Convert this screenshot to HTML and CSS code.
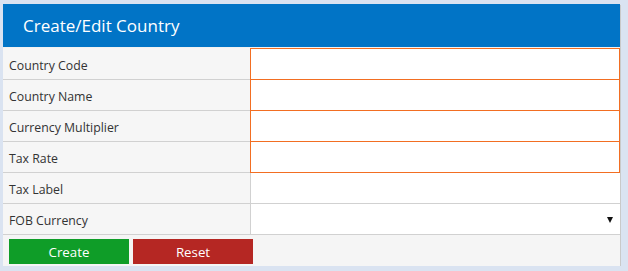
FILE: index.html
```html
<!DOCTYPE html>
<html lang="en">
<head>
  <meta charset="UTF-8">
  <title>Create/Edit Country</title>
  <link rel="stylesheet" href="styles.css">
</head>
<body>
  <div class="panel">
    <header class="panel-head">Create/Edit Country</header>
    <form class="country-form">
      <div class="row">
        <label class="label" for="code">Country Code</label>
        <div class="field"><input type="text" id="code" class="required"></div>
      </div>
      <div class="row">
        <label class="label" for="name">Country Name</label>
        <div class="field"><input type="text" id="name" class="required"></div>
      </div>
      <div class="row">
        <label class="label" for="multiplier">Currency Multiplier</label>
        <div class="field"><input type="text" id="multiplier" class="required"></div>
      </div>
      <div class="row">
        <label class="label" for="taxRate">Tax Rate</label>
        <div class="field"><input type="text" id="taxRate" class="required"></div>
      </div>
      <div class="row">
        <label class="label" for="taxLabel">Tax Label</label>
        <div class="field"><input type="text" id="taxLabel"></div>
      </div>
      <div class="row">
        <label class="label" for="fob">FOB Currency</label>
        <div class="field select-wrap">
          <select id="fob">
            <option></option>
          </select>
        </div>
      </div>
      <div class="actions">
        <button type="submit" class="btn btn-create">Create</button>
        <button type="reset" class="btn btn-reset">Reset</button>
      </div>
    </form>
  </div>
</body>
</html>
```

FILE: styles.css
```css
/* reset */
* { margin: 0; padding: 0; box-sizing: border-box; }
body {
  font-family: 'Open Sans', 'Noto Sans', sans-serif;
  background-color: #dae3f1;
  color: #333;
  padding: 4px 0 0 3px;
}
/* panel */
.panel {
  width: 617px;
  background-color: #fff;
  box-shadow: 1px 1px 0 #c9c9c9;
}
.panel-head {
  height: 43px;
  background-color: #0174c6;
  color: #fff;
  font-size: 17px;
  line-height: 43px;
  padding-left: 20px;
}
.country-form {
  border-top: 1px solid #f2f2f2;
}
/* rows */
.row {
  display: grid;
  grid-template-columns: 248px 1fr;
  grid-template-rows: 30px;
  border-bottom: 1px solid #d1d1d1;
}
.row:first-child {
  grid-template-rows: 31px;
}
.label {
  display: flex;
  align-items: center;
  padding: 3px 0 0 6px;
  background-color: #f6f6f6;
  border-right: 1px solid #d1d1d1;
  font-size: 12.3px;
  color: #333;
}
.field {
  background-color: #fff;
}
.field input {
  display: block;
  width: 100%;
  height: 100%;
  border: none;
  outline: none;
  font-family: inherit;
  font-size: 13px;
  padding: 0 6px;
}
.field input.required {
  width: calc(100% + 1px);
  height: 32px;
  margin-left: -1px;
  border: 1px solid #f26e22;
}
.row + .row .field input.required {
  margin-top: -1px;
}
.select-wrap {
  position: relative;
}
.select-wrap select {
  -webkit-appearance: none;
  appearance: none;
  width: 100%;
  height: 100%;
  border: none;
  background: #fff;
  font-family: inherit;
  font-size: 13px;
  padding: 0 6px;
}
.select-wrap::after {
  content: '';
  position: absolute;
  right: 7px;
  top: 13px;
  border-left: 3px solid transparent;
  border-right: 3px solid transparent;
  border-top: 6px solid #111;
  pointer-events: none;
}
/* buttons */
.actions {
  display: flex;
  gap: 4px;
  height: 31px;
  padding: 4px 0 0 6px;
  background-color: #f5f5f5;
}
.btn {
  width: 120px;
  height: 25px;
  border: none;
  color: #fff;
  font-family: inherit;
  font-size: 13.3px;
  cursor: pointer;
}
.btn-create {
  background-color: #0f9d28;
}
.btn-reset {
  background-color: #b52723;
}
```
